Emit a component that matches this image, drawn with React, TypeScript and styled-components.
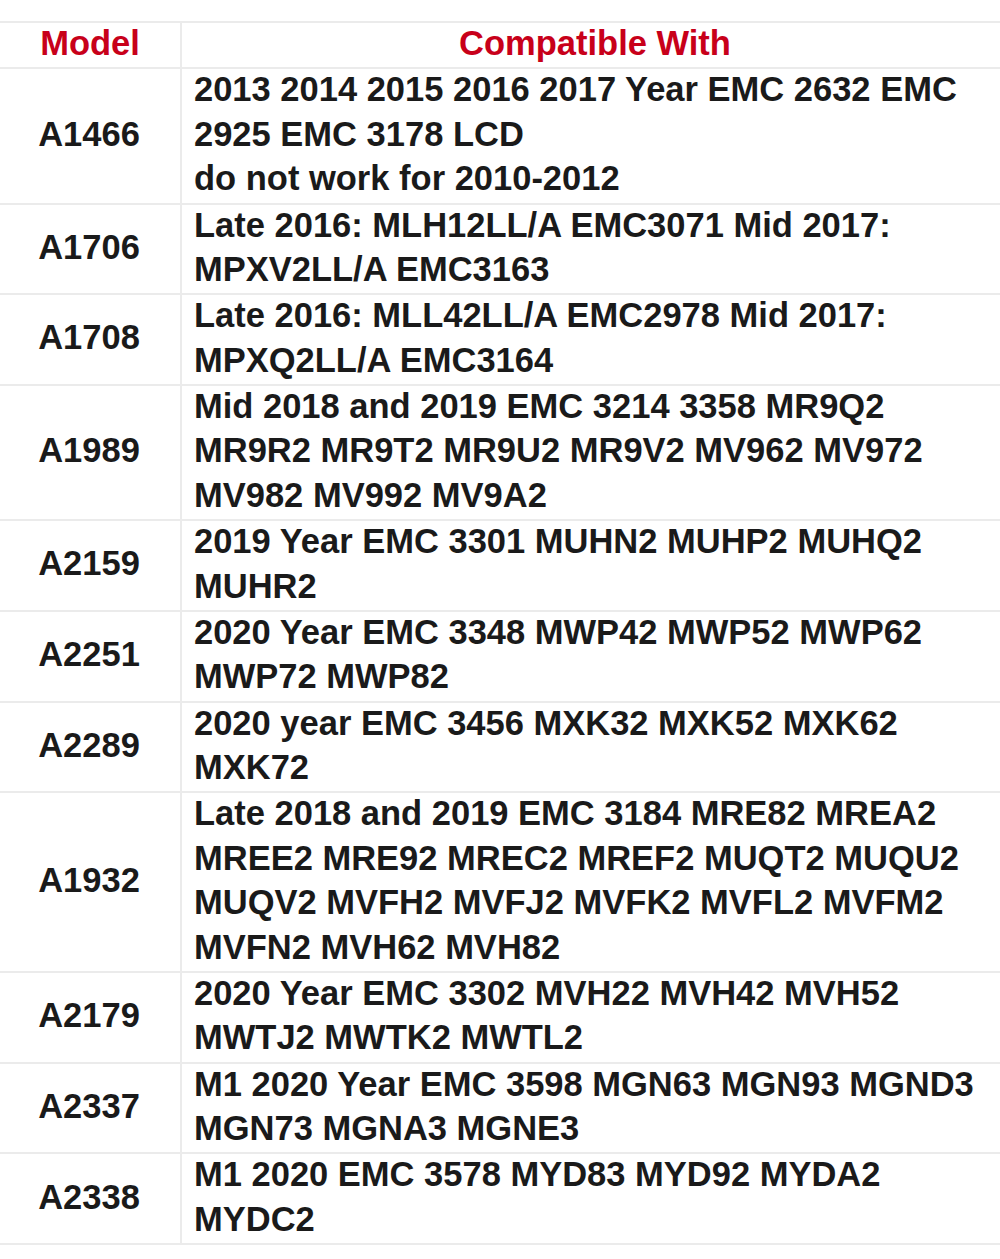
import React from "react";
import styled, { createGlobalStyle } from "styled-components";

const GlobalStyle = createGlobalStyle`
  html, body {
    margin: 0;
    padding: 0;
    background: #fff;
  }
  body {
    font-family: "Liberation Sans", Arial, sans-serif;
  }
`;

const Page = styled.div`
  width: 1000px;
  padding-top: 21px;
  background: #fff;
`;

const Table = styled.div`
  display: grid;
  grid-template-columns: 180px 1fr;
  gap: 2px;
  background: #ebebeb;
  padding: 2px 0;
  font-weight: 700;
  font-size: 34.5px;
  line-height: 40.37px;
  color: #1a1a1a;
`;

const HeadCell = styled.div<{ $offset?: number }>`
  background: #fff;
  color: #c8001a;
  text-align: center;
  white-space: nowrap;
  padding-bottom: 4px;
  padding-left: ${({ $offset }) => $offset ?? 0}px;
`;

const ModelCell = styled.div`
  background: #fff;
  display: flex;
  align-items: center;
  justify-content: center;
  padding-right: 2px;
  padding-bottom: 4px;
`;

const CompatCell = styled.div`
  background: #fff;
  padding-left: 12px;
`;

const Line = styled.div`
  white-space: nowrap;
  padding-bottom: 4px;
`;

const rows: { model: string; lines: string[] }[] = [
  {
    model: "A1466",
    lines: [
      "2013 2014 2015 2016 2017 Year EMC 2632 EMC",
      "2925 EMC 3178 LCD",
      "do not work for 2010-2012",
    ],
  },
  {
    model: "A1706",
    lines: ["Late 2016: MLH12LL/A EMC3071 Mid 2017:", "MPXV2LL/A EMC3163"],
  },
  {
    model: "A1708",
    lines: ["Late 2016: MLL42LL/A EMC2978 Mid 2017:", "MPXQ2LL/A EMC3164"],
  },
  {
    model: "A1989",
    lines: [
      "Mid 2018 and 2019 EMC 3214 3358 MR9Q2",
      "MR9R2 MR9T2 MR9U2 MR9V2 MV962 MV972",
      "MV982 MV992 MV9A2",
    ],
  },
  {
    model: "A2159",
    lines: ["2019 Year EMC 3301 MUHN2 MUHP2 MUHQ2", "MUHR2"],
  },
  {
    model: "A2251",
    lines: ["2020 Year EMC 3348 MWP42 MWP52 MWP62", "MWP72 MWP82"],
  },
  {
    model: "A2289",
    lines: ["2020 year EMC 3456 MXK32 MXK52 MXK62", "MXK72"],
  },
  {
    model: "A1932",
    lines: [
      "Late 2018 and 2019 EMC 3184 MRE82 MREA2",
      "MREE2 MRE92 MREC2 MREF2 MUQT2 MUQU2",
      "MUQV2 MVFH2 MVFJ2 MVFK2 MVFL2 MVFM2",
      "MVFN2 MVH62 MVH82",
    ],
  },
  {
    model: "A2179",
    lines: ["2020 Year EMC 3302 MVH22 MVH42 MVH52", "MWTJ2 MWTK2 MWTL2"],
  },
  {
    model: "A2337",
    lines: ["M1 2020 Year EMC 3598 MGN63 MGN93 MGND3", "MGN73 MGNA3 MGNE3"],
  },
  {
    model: "A2338",
    lines: ["M1 2020 EMC 3578 MYD83 MYD92 MYDA2", "MYDC2"],
  },
];

export default function App() {
  return (
    <>
      <GlobalStyle />
      <Page>
        <Table>
          <HeadCell>Model</HeadCell>
          <HeadCell $offset={8}>Compatible With</HeadCell>
          {rows.map((r) => (
            <React.Fragment key={r.model}>
              <ModelCell>{r.model}</ModelCell>
              <CompatCell>
                {r.lines.map((l, i) => (
                  <Line key={i}>{l}</Line>
                ))}
              </CompatCell>
            </React.Fragment>
          ))}
        </Table>
      </Page>
    </>
  );
}
